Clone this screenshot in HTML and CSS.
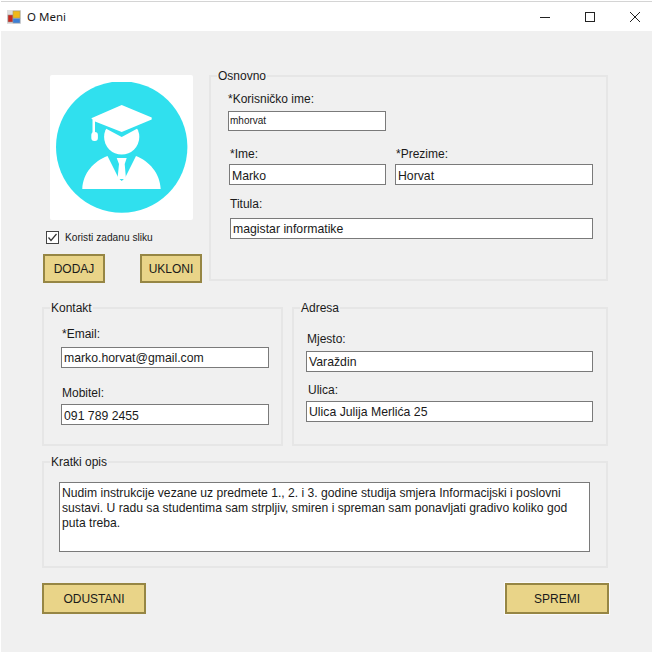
FILE: index.html
```html
<!DOCTYPE html>
<html lang="hr">
<head>
    <meta charset="UTF-8">
    <meta name="viewport" content="width=device-width, initial-scale=1.0">
    <title>O Meni</title>
    <link rel="stylesheet" href="styles.css">
</head>
<body>
    <div class="window">
        <div class="titlebar">
            <svg class="app-icon" width="14" height="14" viewBox="0 0 14 14">
                <rect x="0" y="0" width="14" height="14" fill="#dedede"/>
                <rect x="1" y="5" width="5" height="7" fill="#c8281e" stroke="#9a8a8a" stroke-width="0.6"/>
                <rect x="6" y="1" width="7" height="7" fill="#f0b818" stroke="#a89a6a" stroke-width="0.6"/>
                <rect x="6" y="8.5" width="7" height="4.5" fill="#3d7fd6" stroke="#8a9ab0" stroke-width="0.6"/>
            </svg>
            <span class="title">O Meni</span>
            <div class="controls">
                <svg width="10" height="10" viewBox="0 0 10 10"><path d="M0 5.5H10" stroke="#222" fill="none"/></svg>
                <svg width="10" height="10" viewBox="0 0 10 10"><rect x="0.5" y="0.5" width="9" height="9" stroke="#222" fill="none"/></svg>
                <svg width="10" height="10" viewBox="0 0 10 10"><path d="M0 0L10 10M10 0L0 10" stroke="#222" fill="none"/></svg>
            </div>
        </div>

        <div class="content">
            <div class="top-row">
                <div class="picture-col">
                    <div class="picture">
                        <svg width="143" height="145" viewBox="0 0 143 145">
                            <defs><clipPath id="clip"><rect x="0" y="7" width="143" height="131"/></clipPath></defs>
                            <circle cx="71.7" cy="72" r="65.7" fill="#30e0ee" clip-path="url(#clip)"/>
                            <circle cx="71.7" cy="62" r="17.6" fill="#fff"/>
                            <path d="M38 44L71.7 62L105 44V36H38Z" fill="#30e0ee"/>
                            <path d="M71.7 30L101.7 42.5V44.5L71.7 57L45 46.5V58H42.5V44.5L41.3 43.3Z" fill="#fff"/>
                            <rect x="41.3" y="57" width="6.6" height="9" rx="3" fill="#fff"/>
                            <path d="M32.3 114C33 98 44 86 57.5 81L68.5 103L71.7 106L75 103L86 81C99 86 110 98 110.7 114Z" fill="#fff"/>
                            <path d="M66.7 83H76.7L74.7 89L76 104H67.5L69 89Z" fill="#fff"/>
                        </svg>
                    </div>
                    <label class="check">
                        <svg class="check-box" width="13" height="13" viewBox="0 0 13 13">
                            <rect x="0.5" y="0.5" width="12" height="12" fill="#fff" stroke="#444"/>
                            <path d="M2.5 6.5L5 9.5L10.5 3" stroke="#333" fill="none" stroke-width="1.2"/>
                        </svg>
                        Koristi zadanu sliku
                    </label>
                    <div class="picture-buttons">
                        <button class="btn btn-small">DODAJ</button>
                        <button class="btn btn-small">UKLONI</button>
                    </div>
                </div>

                <fieldset class="group group-basic">
                    <legend>Osnovno</legend>
                    <div class="group-body">
                        <div class="field field-username">
                            <span class="label">*Korisničko ime:</span>
                            <div class="input small-text">mhorvat</div>
                        </div>
                        <div class="name-row">
                            <div class="field field-name">
                                <span class="label label-shift">*Ime:</span>
                                <div class="input input-low">Marko</div>
                            </div>
                            <div class="field field-surname">
                                <span class="label label-shift">*Prezime:</span>
                                <div class="input input-low">Horvat</div>
                            </div>
                        </div>
                        <div class="field field-title">
                            <span class="label">Titula:</span>
                            <div class="input">magistar informatike</div>
                        </div>
                    </div>
                </fieldset>
            </div>

            <div class="middle-row">
                <fieldset class="group group-contact">
                    <legend>Kontakt</legend>
                    <div class="group-body">
                        <div class="field field-email">
                            <span class="label label-shift">*Email:</span>
                            <div class="input">marko.horvat@gmail.com</div>
                        </div>
                        <div class="field field-phone">
                            <span class="label label-shift">Mobitel:</span>
                            <div class="input input-low">091 789 2455</div>
                        </div>
                    </div>
                </fieldset>
                <fieldset class="group group-address">
                    <legend>Adresa</legend>
                    <div class="group-body">
                        <div class="field field-city">
                            <span class="label label-shift">Mjesto:</span>
                            <div class="input">Varaždin</div>
                        </div>
                        <div class="field field-street">
                            <span class="label label-shift-2">Ulica:</span>
                            <div class="input">Ulica Julija Merlića 25</div>
                        </div>
                    </div>
                </fieldset>
            </div>

            <fieldset class="group group-about">
                <legend>Kratki opis</legend>
                <div class="group-body">
                    <div class="textarea">Nudim instrukcije vezane uz predmete 1., 2. i 3. godine studija smjera Informacijski i poslovni sustavi. U radu sa studentima sam strpljiv, smiren i spreman sam ponavljati gradivo koliko god puta treba.</div>
                </div>
            </fieldset>

            <div class="footer">
                <button class="btn btn-large">ODUSTANI</button>
                <button class="btn btn-large btn-save">SPREMI</button>
            </div>
        </div>
    </div>
</body>
</html>
```

FILE: styles.css
```css
html, body {
    margin: 0;
    padding: 0;
}
body {
    width: 652px;
    height: 652px;
    overflow: hidden;
    background: #fff;
    font-family: "Liberation Sans", Arial, sans-serif;
    font-size: 12px;
    color: #1a1a1a;
}
.window {
    height: 652px;
    display: flex;
    flex-direction: column;
    box-sizing: border-box;
    padding: 1px 0 0 1px;
}
.titlebar {
    box-sizing: border-box;
    height: 30px;
    flex: none;
    display: flex;
    align-items: center;
    padding-left: 6px;
    background: #fff;
    border-top: 1px solid #d4d4d4;
}
.app-icon {
    flex: none;
    margin-right: 6px;
}
.title {
    font-family: "Noto Sans", sans-serif;
    font-size: 11.5px;
}
.controls {
    margin-left: auto;
    display: flex;
    gap: 35px;
    padding-right: 12px;
}
.content {
    flex: 1;
    background: #f0f0f0;
    padding: 38px 0 0 41px;
}
.top-row {
    display: flex;
    height: 212px;
}
.picture-col {
    width: 167px;
    padding-top: 6px;
}
.picture {
    width: 143px;
    height: 145px;
    margin-left: 8px;
    background: #fff;
    border-radius: 2px;
}
.picture svg {
    display: block;
}
.check {
    display: flex;
    align-items: center;
    gap: 6px;
    margin: 11px 0 0 4px;
    font-size: 10.2px;
}
.check-box {
    flex: none;
}
.picture-buttons {
    display: flex;
    gap: 35px;
    margin: 10px 0 0 1px;
}
.btn {
    box-sizing: border-box;
    padding: 0;
    background: #e9d488;
    border: 2px solid #968644;
    font-family: "Liberation Sans", Arial, sans-serif;
    color: #1a1a1a;
}
.btn-small {
    width: 62px;
    height: 29px;
    font-size: 12px;
}
.btn-large {
    width: 104px;
    height: 31px;
    font-size: 12px;
}
.btn-save {
    box-shadow: 0 0 0 1px #fafafa;
}
.group {
    box-sizing: border-box;
    margin: 0;
    padding: 0 6px;
    border: 2px solid #e6e6e6;
    min-width: 0;
}
.group legend {
    padding: 0 1px;
    line-height: 14px;
}
.group-basic {
    width: 399px;
    height: 212px;
}
.group-basic .group-body {
    padding: 9px 7px 0 11px;
}
.middle-row {
    display: flex;
    gap: 9px;
    margin-top: 20px;
}
.group-contact {
    width: 241px;
    height: 145px;
}
.group-contact .group-body {
    padding: 0 6px 0 11px;
}
.group-address {
    width: 316px;
    height: 145px;
}
.group-address .group-body {
    padding: 0 7px 0 6px;
}
.group-about {
    width: 566px;
    height: 113px;
    margin-top: 9px;
}
.group-about .group-body {
    padding: 0 0 0 9px;
}
.field {
    display: flex;
    flex-direction: column;
}
.label {
    line-height: 14px;
}
.label-shift {
    margin-left: 1px;
}
.label-shift-2 {
    margin-left: 2px;
}
.input {
    box-sizing: border-box;
    height: 21px;
    line-height: 21px;
    padding-left: 2px;
    background: #fff;
    border: 1px solid #7a7a7a;
    font-size: 12.25px;
    white-space: nowrap;
}
.input-low {
    padding-top: 1px;
}
.input.small-text {
    font-size: 10px;
    height: 20px;
    line-height: 18px;
    padding-left: 1px;
}
.field-username {
    width: 158px;
    gap: 5px;
}
.name-row {
    display: flex;
    gap: 9px;
    margin: 16px 0 0 1px;
}
.field-name {
    width: 157px;
    gap: 3px;
}
.field-surname {
    width: 198px;
    gap: 3px;
}
.field-title {
    margin: 12px 0 0 2px;
    gap: 7px;
}
.field-email {
    margin-top: 12px;
    gap: 6px;
}
.field-phone {
    margin-top: 18px;
    gap: 4px;
}
.field-city {
    margin-top: 17px;
    gap: 5px;
}
.field-street {
    margin-top: 11px;
    gap: 4px;
}
.textarea {
    box-sizing: border-box;
    width: 531px;
    height: 70px;
    margin-top: 13px;
    padding: 3px 2px;
    background: #fff;
    border: 1px solid #7a7a7a;
    font-size: 12.15px;
    line-height: 15px;
}
.footer {
    display: flex;
    justify-content: space-between;
    width: 567px;
    margin-top: 15px;
}
```
